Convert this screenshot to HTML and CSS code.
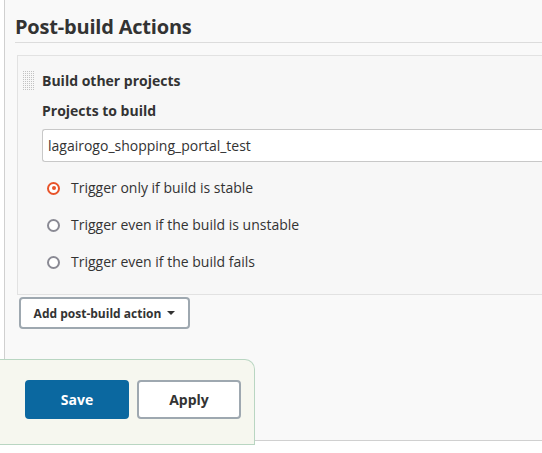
FILE: index.html
```html
<!DOCTYPE html>
<html>
<head>
<meta charset="utf-8">
<link rel="stylesheet" href="styles.css">
</head>
<body>
<div class="page">
  <h2 class="section-title">Post-build Actions</h2>
  <div class="block">
    <div class="block-head">
      <svg class="grip" width="11" height="20" viewBox="0 0 11 20">
        <defs>
          <pattern id="dots" width="2" height="2" patternUnits="userSpaceOnUse">
            <rect x="0" y="0" width="1" height="1" fill="#c2c2c2"/>
          </pattern>
        </defs>
        <rect x="0" y="0" width="11" height="20" fill="url(#dots)"/>
      </svg>
      <span class="block-title">Build other projects</span>
    </div>
    <div class="block-body">
      <div class="label">Projects to build</div>
      <div class="input">lagairogo_shopping_portal_test</div>
      <ul class="radios">
        <li class="radio-row"><span class="radio checked"></span><span>Trigger only if build is stable</span></li>
        <li class="radio-row"><span class="radio"></span><span>Trigger even if the build is unstable</span></li>
        <li class="radio-row"><span class="radio"></span><span>Trigger even if the build fails</span></li>
      </ul>
    </div>
  </div>
  <button class="add-btn">Add post-build action <span class="caret"></span></button>
</div>
<div class="sticker">
  <button class="btn primary">Save</button>
  <button class="btn">Apply</button>
</div>
</body>
</html>
```
FILE: styles.css
```css
html, body {
  margin: 0;
  padding: 0;
  background: #ffffff;
  overflow: hidden;
  width: 542px;
  height: 453px;
}
body {
  font-family: "Open Sans", "Noto Sans", sans-serif;
  color: #333333;
  position: relative;
}
.page {
  margin-left: 4px;
  width: 560px;
  height: 440px;
  border-left: 1px solid #d0d0d0;
  border-bottom: 1px solid #d0d0d0;
  background: #f9f9f9;
  box-sizing: content-box;
}
.section-title {
  margin: 0 0 0 10px;
  padding: 15px 0 4px;
  font-size: 20px;
  line-height: 23px;
  font-weight: 700;
  color: #333;
  border-bottom: 1px solid #dcdcdc;
  letter-spacing: -0.2px;
}
.block {
  margin: 12px 0 0 12px;
  height: 238px;
  border: 1px solid #e2e2e2;
  border-right: none;
  background: #f7f7f7;
}
.block-head {
  display: flex;
  align-items: flex-start;
  padding: 15px 0 0 5px;
}
.grip {
  display: block;
  margin-right: 8px;
  flex: none;
}
.block-title {
  font-size: 14px;
  font-weight: 700;
  line-height: 20px;
}
.block-body {
  padding-left: 24px;
}
.label {
  font-size: 14px;
  font-weight: 700;
  line-height: 20px;
  margin-top: 10px;
}
.input {
  margin-top: 8px;
  height: 31px;
  border: 1px solid #c8c8c8;
  border-right: none;
  border-radius: 3px 0 0 3px;
  background: #fff;
  font-size: 14px;
  line-height: 31px;
  padding-left: 5px;
}
.radios {
  list-style: none;
  margin: 16px 0 0 5px;
  padding: 0;
  display: flex;
  flex-direction: column;
  gap: 17px;
}
.radio-row {
  display: flex;
  align-items: center;
  gap: 11px;
  font-size: 14px;
  line-height: 20px;
}
.radio {
  width: 13px;
  height: 13px;
  box-sizing: border-box;
  border: 2px solid #8a8a94;
  border-radius: 50%;
  background: #fff;
  position: relative;
}
.radio.checked {
  border-color: #e8542a;
}
.radio.checked::after {
  content: "";
  position: absolute;
  left: 2.5px;
  top: 2.5px;
  width: 4px;
  height: 4px;
  border-radius: 50%;
  background: #e8542a;
}
.add-btn {
  display: flex;
  align-items: center;
  gap: 6px;
  margin: 2px 0 0 14px;
  height: 32px;
  width: 171px;
  justify-content: center;
  border: 2px solid #9ea8b0;
  border-radius: 4px;
  background: #fff;
  font-family: inherit;
  font-size: 12px;
  font-weight: 700;
  color: #333;
  padding: 0;
}
.caret {
  width: 0;
  height: 0;
  border-left: 4px solid transparent;
  border-right: 4px solid transparent;
  border-top: 4px solid #333;
}
.sticker {
  position: absolute;
  left: 0;
  top: 359px;
  width: 229px;
  padding: 20px 0 0 25px;
  box-sizing: content-box;
  display: flex;
  align-items: flex-start;
  gap: 8px;
  background: #f6f7ef;
  border: 1px solid #b9d6c2;
  border-left: none;
  border-radius: 0 10px 0 0;
  height: 64px;
}
.btn {
  width: 104px;
  height: 39px;
  border: 2px solid #9ea8b0;
  border-radius: 4px;
  background: #fff;
  font-family: inherit;
  font-size: 14px;
  font-weight: 700;
  color: #333;
  padding: 0;
}
.btn.primary {
  background: #0b68a0;
  border-color: #0b68a0;
  color: #fff;
}
```
